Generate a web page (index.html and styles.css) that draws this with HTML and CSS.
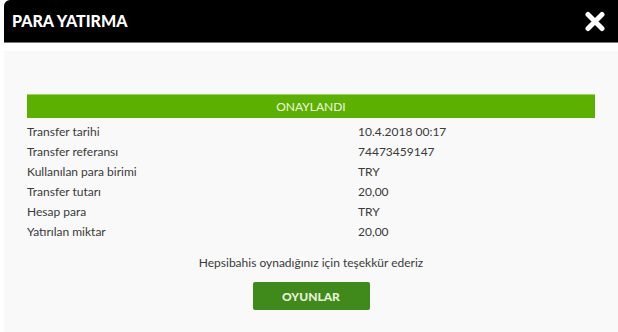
FILE: index.html
```html
<!DOCTYPE html>
<html lang="tr">
<head>
    <meta charset="UTF-8">
    <title>Para Yatırma</title>
    <link rel="stylesheet" href="styles.css">
</head>
<body>
    <div class="modal">
        <header class="modal-header">
            <h1>PARA YATIRMA</h1>
            <button class="close" aria-label="Kapat">
                <svg width="22" height="21" viewBox="0 0 22 21">
                    <path d="M4 3.5 L18 17.5 M18 3.5 L4 17.5" stroke="#fff" stroke-width="5" stroke-linecap="round" fill="none"/>
                </svg>
            </button>
        </header>
        <section class="modal-body">
            <div class="status">ONAYLANDI</div>
            <div class="details">
                <div class="row"><span>Transfer tarihi</span><span>10.4.2018 00:17</span></div>
                <div class="row"><span>Transfer referansı</span><span>74473459147</span></div>
                <div class="row"><span>Kullanılan para birimi</span><span>TRY</span></div>
                <div class="row"><span>Transfer tutarı</span><span>20,00</span></div>
                <div class="row"><span>Hesap para</span><span>TRY</span></div>
                <div class="row"><span>Yatırılan miktar</span><span>20,00</span></div>
            </div>
            <p class="thanks">Hepsibahis oynadığınız için teşekkür ederiz</p>
            <a href="#" class="btn">OYUNLAR</a>
        </section>
    </div>
</body>
</html>
```
FILE: styles.css
```css
* {
    margin: 0;
    padding: 0;
    box-sizing: border-box;
}

body {
    background: #fff;
    font-family: 'Lato', 'Liberation Sans', sans-serif;
    color: #3a3a3a;
    width: 618px;
    height: 332px;
    overflow: hidden;
}

.modal {
    margin-left: 4px;
    display: flex;
    flex-direction: column;
    height: 100%;
}

.modal-header {
    background: #000;
    height: 43px;
    border-top-left-radius: 6px;
    border-bottom: 1px solid #777;
    display: flex;
    align-items: center;
    justify-content: space-between;
    padding: 0 12px 0 8px;
}

.modal-header h1 {
    font-size: 16px;
    font-weight: 900;
    line-height: 20px;
    color: #fff;
}

.close {
    background: none;
    border: none;
    display: flex;
    margin-top: 1px;
}

.modal-body {
    margin-top: 8px;
    flex: 1;
    background: #f9f9f9;
    padding: 43px 23px 0 23px;
    display: flex;
    flex-direction: column;
    align-items: center;
}

.status {
    width: 100%;
    height: 24px;
    background: #5bb000;
    border-top: 1px solid #9fd36a;
    color: #f0f7e0;
    font-size: 12px;
    display: flex;
    align-items: center;
    justify-content: center;
}

.details {
    width: 100%;
    padding-top: 4px;
}

.row {
    display: grid;
    grid-template-columns: 331px 1fr;
    height: 20px;
    line-height: 20px;
    font-size: 12px;
}

.thanks {
    margin-top: 14px;
    font-size: 12px;
    line-height: 14px;
}

.btn {
    margin-top: 12px;
    width: 117px;
    height: 28px;
    background: #3f8a1a;
    border-radius: 2px;
    color: #e6f0dc;
    font-size: 12px;
    font-weight: 900;
    text-decoration: none;
    display: flex;
    align-items: center;
    justify-content: center;
}
```
